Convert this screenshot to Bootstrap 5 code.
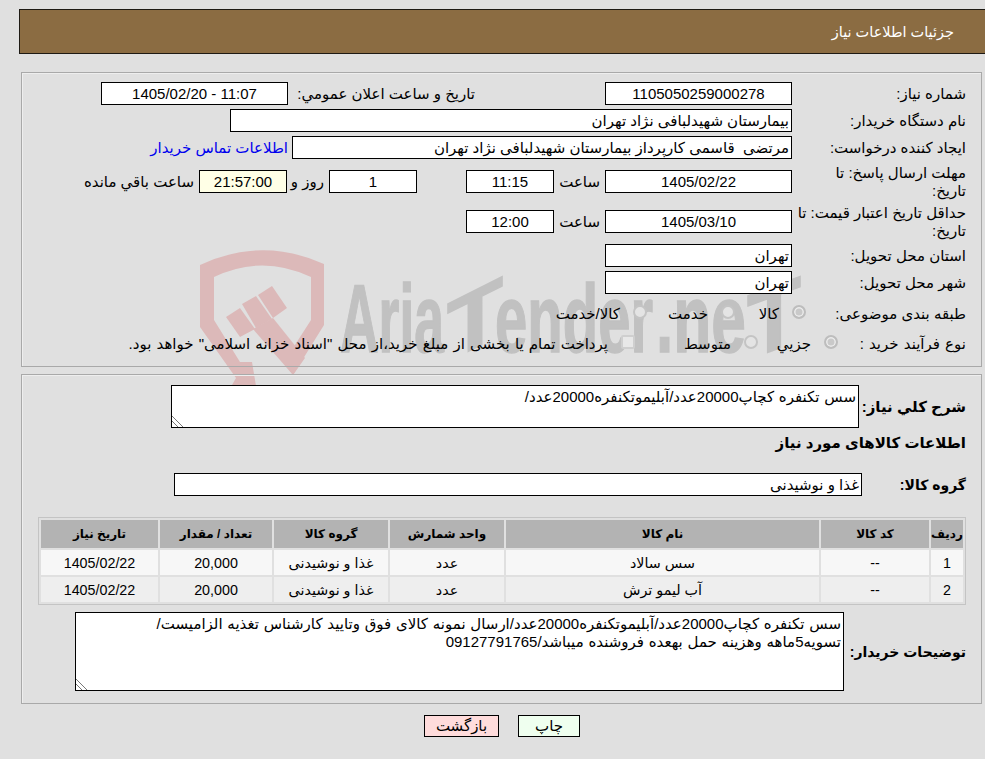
<!DOCTYPE html>
<html lang="fa" dir="rtl">
<head>
<meta charset="utf-8">
<title>جزئیات اطلاعات نیاز</title>
<link href="https://cdn.jsdelivr.net/npm/bootstrap@5.3.0/dist/css/bootstrap.min.css" rel="stylesheet">
<style>
html,body{height:759px;overflow:hidden}
body{background:#e0e0e0;color:#000;font-family:"Liberation Sans","DejaVu Sans",sans-serif;font-size:15px;line-height:18px}
.stage{position:relative;height:759px;padding-top:9px}
.wm{position:absolute;left:0;top:0;z-index:0;pointer-events:none;direction:ltr}
.wm text{font-family:"Liberation Sans","DejaVu Sans",sans-serif;font-weight:700;fill:#c1c1c1;stroke:#c1c1c1;stroke-width:1.5px;direction:ltr}
.topbar{position:relative;z-index:1;height:45px;margin-left:19px;background:#8b6c42;border:1px solid #1e1a14;border-right:0;color:#fff;padding-right:31px;display:flex;align-items:center;font-size:14.5px}
.pane{position:relative;z-index:1;margin-left:21px;margin-right:3px;border:1px solid #a9a9a9;box-shadow:inset 1px 1px 0 #eee}
.pane-a{margin-top:18px;height:295px;padding-top:9px}
.pane-b{margin-top:7px;height:330px;padding-top:10px}
.frow{display:flex;align-items:center;margin-top:5px}
.frow:first-child{margin-top:0}
.flabel{flex:none;width:189px;padding-right:15px;white-space:nowrap}
.fld{flex:none;background:#fff;border:1px solid #000;height:23px;line-height:21px;white-space:pre;overflow:hidden}
.ctr{text-align:center}
.rgt{text-align:right;padding-right:2px}
.w187{width:187px}.w88{width:88px}.w562{width:562px}.w500{width:500px}
.tall{height:35px}
.timer{background:#ffffe6}
.saat{width:51px;flex:none;text-align:right;padding-right:5px;white-space:nowrap}
.pub{width:317px;flex:none;padding-right:130px;text-align:right;white-space:nowrap}
.buyer-link{color:#0000ee;text-decoration:none;margin-right:4px;white-space:nowrap}
.rowday{margin-right:49px}
.txt-r{margin-right:5px;width:37px;flex:none;white-space:nowrap}
.txt-l{margin-right:5px;white-space:nowrap}
.r-lab-a{width:175px}.r-lab-b{width:143px}
.row-radio{margin-top:11px}
.row-proc{margin-top:12px;word-spacing:1px}
.ropt{display:flex;align-items:center;flex:none;white-space:nowrap}
.ropt .form-check-input{margin:-4px 0 0 13px;flex:none}
.form-check-input.rdo{width:14px;height:14px;background:#e4e4e4;border:2px solid #c4c4c4;opacity:1;border-radius:50%;box-shadow:none}
.form-check-input.rdo:checked{background:#c9c9c9;box-shadow:inset 0 0 0 1.5px #ececec;border-color:#bdbdbd;background-image:none}
.form-check-input.box{width:14px;height:14px;background:#e8e8e8;border:2px solid #cfcfcf;opacity:1;border-radius:2px}
.w71{width:71px}.w88b{width:88px}.w80{width:80px}.w123{width:123px}
.strong-l{font-weight:700;font-size:15px;white-space:nowrap}
.strong-s{font-weight:700;font-size:14px;white-space:nowrap}
.tarea{display:block;flex:none;background:#fff;border:1px solid #000;border-radius:0;padding:2px;color:#000;font:inherit;line-height:18px;overflow:hidden;resize:both;outline:0;word-spacing:.6px}
.tarea::-webkit-resizer{background:linear-gradient(45deg,transparent 3.6px,#777 3.6px 4.8px,transparent 4.8px 7.2px,#777 7.2px 8.4px,transparent 8.4px)}
.ta-a{width:688px;height:43px}
.ta-b{width:769px;height:79px}
.lab-a{width:122px;padding-right:15px;flex:none}
.lab-c{width:119px;padding-right:15px;flex:none}
.lab-d{width:137px;padding-right:15px;flex:none}
.heading-row{margin-top:6px;padding-right:15px;height:18px}
.grp{width:688px}
.row-grp{margin-top:21px}
.tblwrap{margin:21px 15px 0 16px;border:1px solid #c4c4c4}
.table.items{width:926px;margin:0;border-collapse:separate;border-spacing:2px;table-layout:fixed;font-size:14.3px;line-height:18px}
.table.items>*>*>*{border:0;padding:0;box-shadow:none;text-align:center;vertical-align:middle;color:#000}
.table.items>thead>tr>th{background:#b3b3b3;height:28px;font-size:12px;white-space:nowrap}
.table.items>tbody>tr:nth-child(odd)>td{background:#f7f7f7;height:25px}
.table.items>tbody>tr:nth-child(even)>td{background:#eeeeee;height:25px}
.row-note{margin-top:7px;align-items:center}
.actions{position:relative;z-index:1;display:flex;gap:19px;margin-top:11px;padding-right:405px}
.act{border:1px solid #000;border-radius:0;height:22px;padding:0;line-height:20px;font-size:15px;color:#000}
.act-print{width:62px;background:#efffef}
.act-back{width:75px;background:#ffdcdc}
</style>
</head>
<body>
<div class="stage">
<svg class="wm" width="985" height="759" viewBox="0 0 985 759" aria-hidden="true">
<path fill="#dcb9b9" d="M200 265Q262 236 324 264L324 325L293 375L284 362L311 320L311 277Q262 254 214 277L214 320L240 362L252 362L257 392L228 392L236 378L200 327Z"/>
<g fill="#dcb9b9">
<polygon points="226,317 240,308 255,329 240,337"/>
<polygon points="242,304 256,296 272,319 256,328"/>
<polygon points="258,295 272,286 287,308 273,318"/>
<polygon points="253,329 273,318 305,358 293,375"/>
</g>
<text x="340" y="352" font-size="96" textLength="104" lengthAdjust="spacingAndGlyphs">Aria</text>
<text x="0" y="0" font-size="84" textLength="56" lengthAdjust="spacingAndGlyphs" transform="matrix(1 -.5 0 1 447 362)">T</text>
<text x="495" y="352" font-size="96" textLength="158" lengthAdjust="spacingAndGlyphs">ender</text>
<text x="656" y="352" font-size="96" textLength="90" lengthAdjust="spacingAndGlyphs">.ne</text>
<text x="0" y="0" font-size="93" textLength="54" lengthAdjust="spacingAndGlyphs" transform="matrix(1 -.37 0 1 747 360)">T</text>
</svg>

<div class="topbar">جزئیات اطلاعات نیاز</div>

<div class="pane pane-a">
  <div class="frow">
    <div class="flabel">شماره نیاز:</div>
    <div class="fld w187 ctr">1105050259000278</div>
    <div class="pub">تاریخ و ساعت اعلان عمومي:</div>
    <div class="fld w187 ctr" dir="ltr">1405/02/20 - 11:07</div>
  </div>
  <div class="frow mt-1">
    <div class="flabel">نام دستگاه خریدار:</div>
    <div class="fld w562 rgt">بیمارستان شهیدلبافی نژاد تهران</div>
  </div>
  <div class="frow mt-1">
    <div class="flabel">ایجاد کننده درخواست:</div>
    <div class="fld w500 rgt">مرتضی  قاسمی کارپرداز بیمارستان شهیدلبافی نژاد تهران</div>
    <a class="buyer-link" href="#">اطلاعات تماس خریدار</a>
  </div>
  <div class="frow tall">
    <div class="flabel">مهلت ارسال پاسخ: تا<br>تاریخ:</div>
    <div class="fld w187 ctr">1405/02/22</div>
    <div class="saat">ساعت</div>
    <div class="fld w88 ctr">11:15</div>
    <div class="fld w88 ctr rowday">1</div>
    <div class="txt-r">روز و</div>
    <div class="fld w88 ctr timer">21:57:00</div>
    <div class="txt-l">ساعت باقي مانده</div>
  </div>
  <div class="frow tall">
    <div class="flabel">حداقل تاریخ اعتبار قیمت: تا<br>تاریخ:</div>
    <div class="fld w187 ctr">1405/03/10</div>
    <div class="saat">ساعت</div>
    <div class="fld w88 ctr">12:00</div>
  </div>
  <div class="frow">
    <div class="flabel">استان محل تحویل:</div>
    <div class="fld w187 rgt">تهران</div>
  </div>
  <div class="frow mt-1">
    <div class="flabel">شهر محل تحویل:</div>
    <div class="fld w187 rgt">تهران</div>
  </div>
  <div class="frow row-radio">
    <div class="flabel r-lab-a">طبقه بندی موضوعی:</div>
    <label class="ropt w71"><input class="form-check-input rdo" type="radio" name="kind" checked disabled>کالا</label>
    <label class="ropt w88b"><input class="form-check-input rdo" type="radio" name="kind" disabled>خدمت</label>
    <label class="ropt"><input class="form-check-input rdo" type="radio" name="kind" disabled>کالا/خدمت</label>
  </div>
  <div class="frow row-proc">
    <div class="flabel r-lab-b">نوع فرآیند خرید :</div>
    <label class="ropt w80"><input class="form-check-input rdo" type="radio" name="proc" checked disabled>جزیي</label>
    <label class="ropt w123"><input class="form-check-input rdo" type="radio" name="proc" disabled>متوسط</label>
    <label class="ropt"><input class="form-check-input box" type="checkbox" disabled>پرداخت تمام یا بخشی از مبلغ خرید،از محل "اسناد خزانه اسلامی" خواهد بود.</label>
  </div>
</div>

<div class="pane pane-b">
  <div class="d-flex align-items-center">
    <div class="lab-a strong-l">شرح كلي نیاز:</div>
    <textarea class="tarea ta-a" readonly>سس تکنفره کچاپ20000عدد/آبلیموتکنفره20000عدد/</textarea>
  </div>
  <div class="heading-row strong-l">اطلاعات کالاهای مورد نیاز</div>
  <div class="d-flex align-items-center row-grp">
    <div class="lab-c strong-s">گروه کالا:</div>
    <div class="fld grp rgt">غذا و نوشیدنی</div>
  </div>
  <div class="tblwrap">
    <table class="table items">
      <colgroup><col style="width:32px"><col style="width:108px"><col style="width:313px"><col style="width:114px"><col style="width:114px"><col style="width:112px"><col style="width:117px"></colgroup>
      <thead><tr><th>ردیف</th><th>کد کالا</th><th>نام کالا</th><th>واحد شمارش</th><th>گروه کالا</th><th>تعداد / مقدار</th><th>تاریخ نیاز</th></tr></thead>
      <tbody>
        <tr><td>1</td><td>--</td><td>سس سالاد</td><td>عدد</td><td>غذا و نوشیدنی</td><td>20,000</td><td>1405/02/22</td></tr>
        <tr><td>2</td><td>--</td><td>آب لیمو ترش</td><td>عدد</td><td>غذا و نوشیدنی</td><td>20,000</td><td>1405/02/22</td></tr>
      </tbody>
    </table>
  </div>
  <div class="d-flex row-note">
    <div class="lab-d strong-s">توضیحات خریدار:</div>
    <textarea class="tarea ta-b" readonly>سس تکنفره کچاپ20000عدد/آبلیموتکنفره20000عدد/ارسال نمونه کالای فوق وتایید کارشناس تغذیه الزامیست/
تسویه5ماهه وهزینه حمل بهعده فروشنده میباشد/09127791765</textarea>
  </div>
</div>

<div class="actions">
  <button type="button" class="btn act act-print">چاپ</button>
  <button type="button" class="btn act act-back">بازگشت</button>
</div>
</div>
<script src="https://cdn.jsdelivr.net/npm/bootstrap@5.3.0/dist/js/bootstrap.bundle.min.js"></script>
</body>
</html>
